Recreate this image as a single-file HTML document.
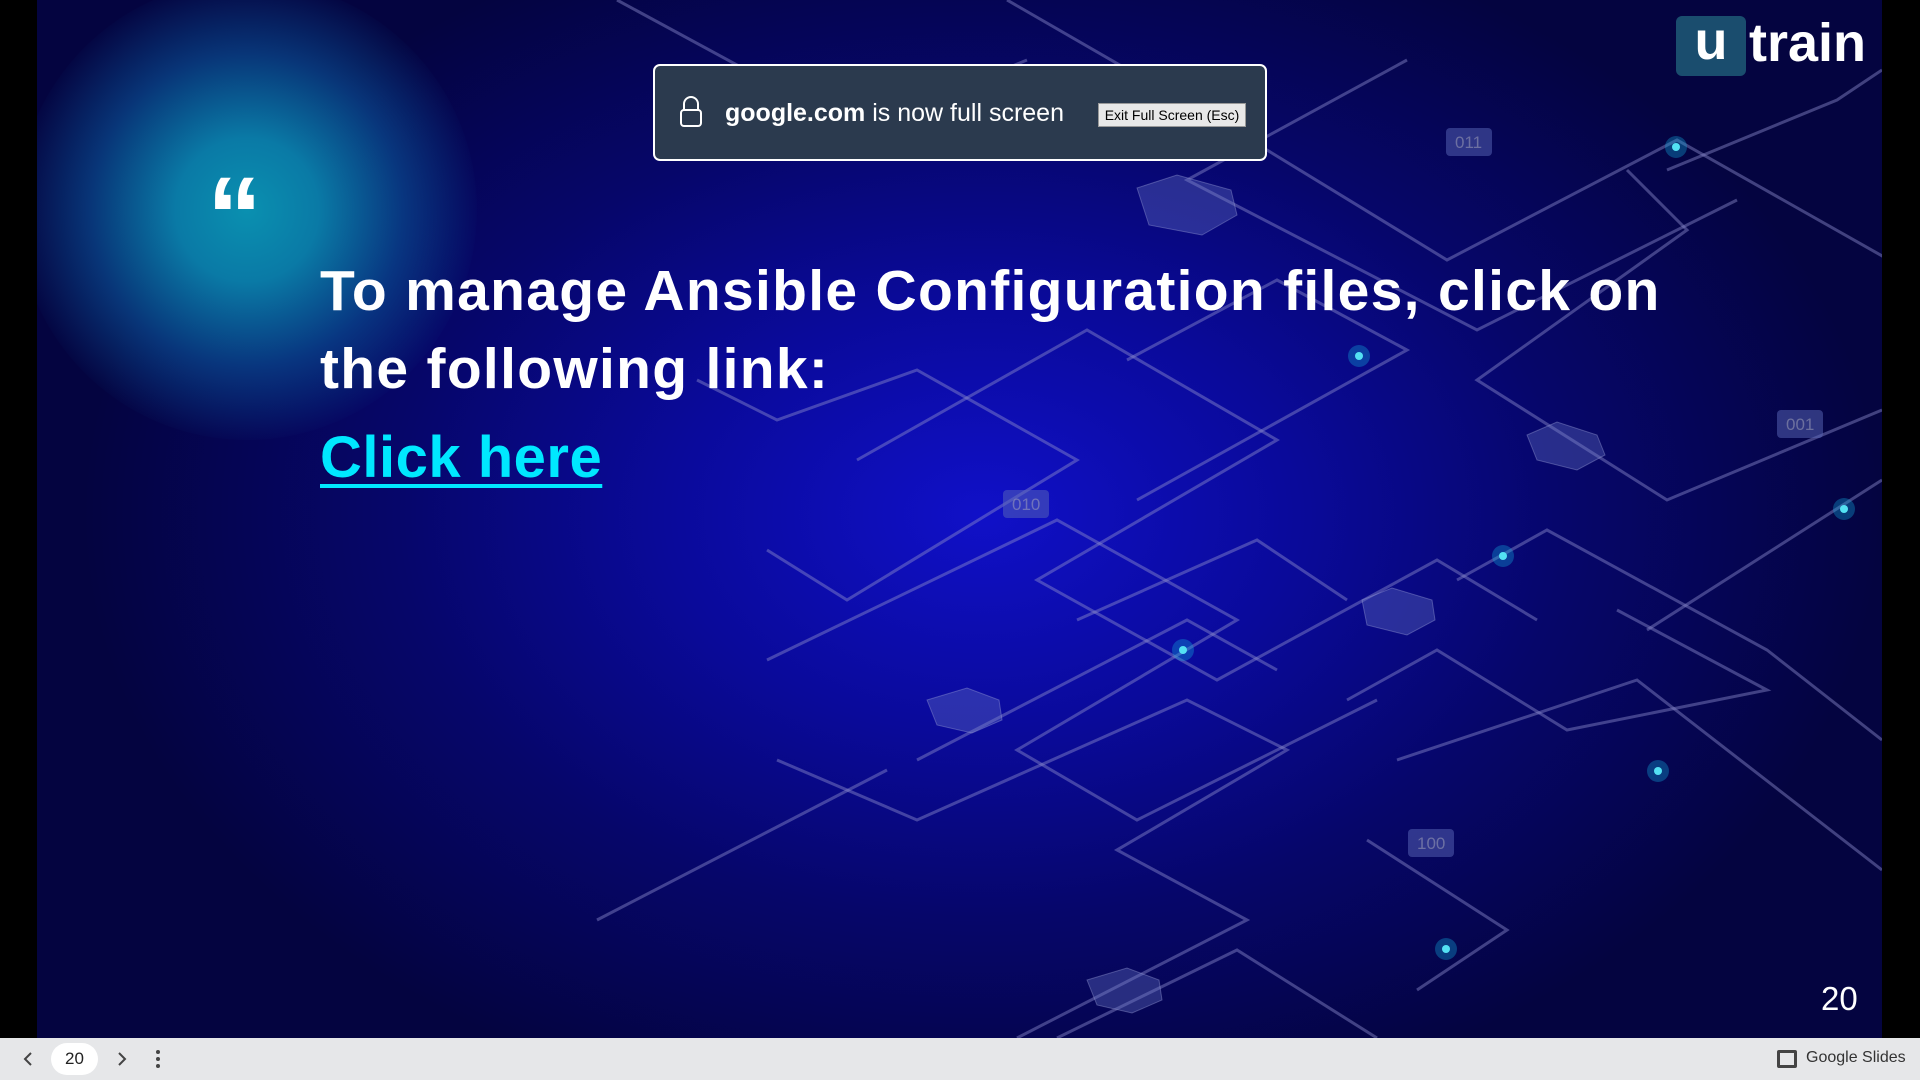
<!DOCTYPE html>
<html><head><meta charset="utf-8"><style>
*{margin:0;padding:0;box-sizing:border-box}
body{width:1920px;height:1080px;background:#000;overflow:hidden;position:relative;font-family:"Liberation Sans",sans-serif}
#slide{position:absolute;left:37px;top:0;width:1845px;height:1038px;overflow:hidden;
background:radial-gradient(ellipse 900px 620px at 945px 515px,#1010c8 0%,#0a0a9a 35%,#06066a 65%,#040440 100%)}
.glow{position:absolute;left:-20px;top:-20px;width:460px;height:460px;border-radius:50%;
background:radial-gradient(circle,#0a90b0 0%,#0a7aa6 22%,rgba(10,80,150,.65) 48%,rgba(10,30,130,0) 72%)}
.title{position:absolute;left:283px;top:252px;color:#fff;font-weight:bold;font-size:57px;line-height:78px;white-space:nowrap;letter-spacing:1.3px}
.link{position:absolute;left:283px;top:424px;color:#00e8ff;font-weight:bold;font-size:58px;text-decoration:underline;text-decoration-thickness:4px;text-underline-offset:7px;letter-spacing:0.5px}
.quote{position:absolute;left:170px;top:162px;color:#fff;font-size:110px;font-weight:bold;line-height:1}
.num{position:absolute;left:1784px;top:980px;color:#fff;font-size:33px}
.logo{position:absolute;left:1639px;top:16px;width:70px;height:60px;background:#1a4d6e;border-radius:6px;color:#fff;font-weight:bold;font-size:54px;text-align:center;line-height:50px}
.train{position:absolute;left:1712px;top:12px;color:#fff;font-weight:bold;font-size:54px;letter-spacing:0px}
.banner{position:absolute;left:653px;top:64px;width:614px;height:97px;background:#2b3a4e;border:2px solid #fff;border-radius:7px;color:#fff}
.banner .t{position:absolute;left:70px;top:33px;font-size:25px}
.banner .b{position:absolute;left:443px;top:37px;width:148px;height:24px;background:#e8e8e8;border:1px solid #999;color:#000;font-size:14px;text-align:center;line-height:22px}
#bar{position:absolute;left:0;top:1038px;width:1920px;height:42px;background:#e6e7e9;color:#333}
</style></head><body>
<div id="slide">
<div class="glow"></div>
<svg width="1845" height="1038" style="position:absolute;left:0;top:0" fill="none" stroke="#8c8ccc" stroke-opacity=".45" stroke-width="3">
<path d="M580 0 L820 130 L990 60"/>
<path d="M970 0 L1230 150 L1410 260 L1640 140 L1870 270"/>
<path d="M1370 60 L1150 180 L1440 330 L1700 200"/>
<path d="M1630 170 L1800 100 L1845 70"/>
<path d="M1590 170 L1650 230 L1440 380 L1630 500 L1845 410"/>
<path d="M1090 360 L1240 280 L1370 350 L1100 500"/>
<path d="M660 380 L740 420 L880 370 L1040 460 L810 600 L730 550"/>
<path d="M820 460 L1050 330 L1240 440 L1000 580 L1180 680 L1400 560 L1500 620"/>
<path d="M730 660 L1020 520 L1200 620 L980 750 L1100 820 L1340 700"/>
<path d="M1040 620 L1220 540 L1310 600"/>
<path d="M1420 580 L1510 530 L1730 650 L1845 740"/>
<path d="M1610 630 L1845 480"/>
<path d="M1310 700 L1400 650 L1530 730 L1730 690 L1580 610"/>
<path d="M1360 760 L1600 680 L1845 870"/>
<path d="M880 760 L1150 620 L1240 670"/>
<path d="M740 760 L880 820 L1150 700 L1250 750 L1080 850 L1210 920 L980 1038"/>
<path d="M1020 1038 L1200 950 L1340 1038"/>
<path d="M1380 990 L1470 930 L1330 840"/>
<path d="M560 920 L850 770"/>
</svg>
<svg width="1845" height="1038" style="position:absolute;left:0;top:0">
<g fill="#6a78c8" fill-opacity=".35" stroke="#9aa0d8" stroke-opacity=".4">
<polygon points="1100,188 1140,175 1194,190 1200,215 1165,235 1112,225"/>
<polygon points="1490,435 1520,422 1560,435 1568,455 1540,470 1500,460"/>
<polygon points="1325,600 1355,588 1395,600 1398,620 1370,635 1330,625"/>
<polygon points="890,700 930,688 962,700 965,720 935,733 900,725"/>
<polygon points="1050,980 1090,968 1122,980 1125,1000 1095,1013 1060,1005"/>
</g>
<g fill="#5a68b8" fill-opacity=".5" font-family="Liberation Sans" font-size="17">
<rect x="1409" y="128" width="46" height="28" rx="4"/><text x="1418" y="148" fill="#aab">011</text>
<rect x="1740" y="410" width="46" height="28" rx="4"/><text x="1749" y="430" fill="#aab">001</text>
<rect x="966" y="490" width="46" height="28" rx="4"/><text x="975" y="510" fill="#aab">010</text>
<rect x="1371" y="829" width="46" height="28" rx="4"/><text x="1380" y="849" fill="#aab">100</text>
</g>
<g fill="#7ff">
<circle cx="1639" cy="147" r="4"/><circle cx="1322" cy="356" r="4"/><circle cx="1807" cy="509" r="4"/>
<circle cx="1466" cy="556" r="4"/><circle cx="1146" cy="650" r="4"/><circle cx="1621" cy="771" r="4"/><circle cx="1409" cy="949" r="4"/>
</g>
<g fill="#1ad" fill-opacity=".35">
<circle cx="1639" cy="147" r="11"/><circle cx="1322" cy="356" r="11"/><circle cx="1807" cy="509" r="11"/>
<circle cx="1466" cy="556" r="11"/><circle cx="1146" cy="650" r="11"/><circle cx="1621" cy="771" r="11"/><circle cx="1409" cy="949" r="11"/>
</g>
</svg>
<div class="quote">“</div>
<div class="title">To manage Ansible Configuration files, click on<br>the following link:</div>
<div class="link">Click here</div>
<div class="num">20</div>
<div class="logo">u</div>
<div class="train">train</div>
</div>
<div class="banner">
<svg style="position:absolute;left:24px;top:30px" width="24" height="32" fill="none" stroke="#fff" stroke-width="2"><path d="M5 14 V8 a7 7 0 0 1 14 0 V14"/><rect x="2" y="14" width="20" height="16" rx="3"/></svg>
<div class="t"><b>google.com</b> is now full screen</div>
<div class="b">Exit Full Screen (Esc)</div>
</div>
<div id="bar">
<svg style="position:absolute;left:22px;top:13px" width="12" height="16" fill="none" stroke="#444" stroke-width="2"><path d="M9 2 L3 8 L9 14"/></svg>
<div style="position:absolute;left:51px;top:5px;width:47px;height:32px;background:#fff;border-radius:16px;text-align:center;line-height:32px;font-size:17px;color:#222">20</div>
<svg style="position:absolute;left:116px;top:13px" width="12" height="16" fill="none" stroke="#444" stroke-width="2"><path d="M3 2 L9 8 L3 14"/></svg>
<div style="position:absolute;left:156px;top:12px;width:4px;height:4px;background:#444;border-radius:2px;box-shadow:0 7px 0 #444,0 14px 0 #444"></div>
<div style="position:absolute;left:1777px;top:12px;width:20px;height:18px;border:3px solid #444;border-radius:2px"></div>
<div style="position:absolute;left:1806px;top:11px;font-size:16px;color:#333">Google Slides</div>
</div>
</body></html>
